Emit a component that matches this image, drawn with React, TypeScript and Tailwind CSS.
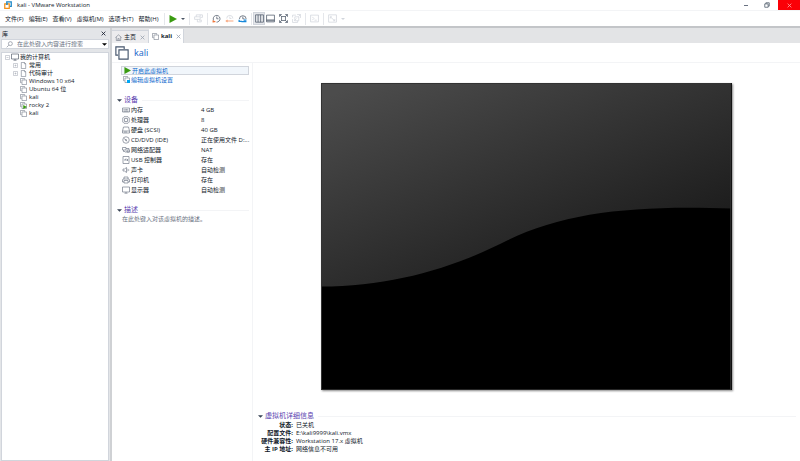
import { useState, type ReactNode } from "react";

type IconName =
  | "send"
  | "snapshot"
  | "revert"
  | "manager"
  | "library"
  | "thumbnails"
  | "fullscreen"
  | "unity"
  | "console"
  | "stretch"
  | "memory"
  | "cpu"
  | "disk"
  | "disc"
  | "network"
  | "usb"
  | "sound"
  | "printer"
  | "display"
  | "vm"
  | "folder"
  | "home"
  | "search";

const SHAPES: Record<IconName, ReactNode> = {
  send: <path d="M4 5V1.500h11V6h-3M1 5h10v4.500H1zM6 9.500V14h7v-3M9 11h4.500M11 1.500v3" />,
  snapshot: (
    <>
      <path d="M3 11.500A6 6 0 1 1 8 14.500" />
      <path d="M8.500 4.500v4h3" />
      <path d="M1 13.500h5M2 11v4" stroke="#f0763a" strokeWidth="2" />
    </>
  ),
  revert: (
    <>
      <path d="M3 8a5.500 5.500 0 0 1 11 0M8.500 4.500v3.500h3" />
      <path d="M2 12.500h13M4.500 10.500L2 12.500l2.500 2" stroke="#f8a880" strokeWidth="1.800" />
    </>
  ),
  manager: (
    <>
      <path d="M2.500 9a6 6 0 1 1 12 0M8.500 4.500v4h3" />
      <path d="M2 10v3h5M6 13.500h9M10 11h5" stroke="#1687d9" strokeWidth="2.200" />
    </>
  ),
  library: <path d="M1 1.500h14v13H1zM5.500 1.500v13M10 1.500v13" />,
  thumbnails: <path d="M1 2h14v12H1zM1 10.500h14M1 12h14" />,
  fullscreen: (
    <path d="M1 5V1h4M11 1h4v4M15 11v4h-4M5 15H1v-4M1 1l4 4M15 1l-4 4M15 15l-4-4M1 15l4-4M4.500 4.500h7v7h-7z" />
  ),
  unity: <path d="M1 6V2h6M9 1h6v6M1 9v6h9v-3M5 5h7v7H5zM12 4l3-3M4 12l4-4" />,
  console: <path d="M1 2h14v12H1zM4 5l3 3-3 3M8 11h4" />,
  stretch: <path d="M1 1.500h14v13H1zM4 5l8 7M4 8V5h3M12 9v3H9" />,
  memory: <path d="M1 4h14v8H1zM4 6v3M6.500 6v3M9 6v3M11.500 6v3M3 10.500h10" />,
  cpu: <path d="M4 1.500h8L14.500 4v8L12 14.500H4L1.500 12V4zM5 5h6v6H5z" />,
  disk: <path d="M3 2h10l2 8v4H1v-4zM1 10h14M4 12h6" />,
  disc: (
    <>
      <circle cx="8" cy="8" r="6.500" />
      <path d="M4 5l4 3 2 3" />
      <circle cx="8" cy="8" r="1" />
    </>
  ),
  network: <path d="M1 3h7v5H1zM3 8v3M8 5h6v3M6 12h9M10 8h5v4h-5zM3 11h3" />,
  usb: <path d="M2 1h12v14H2zM4 8h8M10 6l2 2-2 2M6 8l2-3" />,
  sound: <path d="M2 6h3l4-3v10l-4-3H2zM11.500 5.500q2 2.500 0 5M13.500 8h1" />,
  printer: <path d="M4 6V2h8v4M2 6h12l1 2v4h-3M2 6L1 8v4h3M4 9h8v5H4z" />,
  display: <path d="M1 2h14v10H1zM5 14.500h6M8 12v2" />,
  vm: (
    <>
      <path d="M3.500 10.500H1V1h9.500v2.500" />
      <path d="M4.500 4.500H15V15H4.500z" />
    </>
  ),
  folder: <path d="M3 1h7l3 3v11H3zM10 1v3h3" />,
  home: <path d="M1 8l7-6 7 6M3 7v8h10V7M6.500 15v-4.500h3V15" />,
  search: (
    <>
      <circle cx="10" cy="6" r="4.500" />
      <path d="M6.500 9.500L1.500 14.500" />
    </>
  ),
};

function Icon({ name, className = "size-2 text-gray-500" }: { name: IconName; className?: string }) {
  return (
    <svg
      viewBox="0 0 16 16"
      fill="none"
      stroke="currentColor"
      strokeWidth="1.300"
      className={`shrink-0 ${className}`}
      aria-hidden="true"
    >
      {SHAPES[name]}
    </svg>
  );
}

function Play({ className }: { className: string }) {
  return (
    <svg viewBox="0 0 8 8" fill="#3a9b11" className={`shrink-0 ${className}`} aria-hidden="true">
      <path d="M0.500 0L8 4L0.500 8z" />
    </svg>
  );
}

function Caret({ className }: { className: string }) {
  return (
    <svg viewBox="0 0 8 4" fill="currentColor" className={`shrink-0 ${className}`} aria-hidden="true">
      <path d="M0 0h8L4 4z" />
    </svg>
  );
}

function Cross({ className }: { className: string }) {
  return (
    <svg viewBox="0 0 8 8" fill="none" stroke="currentColor" className={`shrink-0 ${className}`} aria-hidden="true">
      <path d="M1 1l6 6M7 1L1 7" strokeWidth="1.300" />
    </svg>
  );
}

function Separator() {
  return <span className="h-3 w-px shrink-0 bg-gray-200" />;
}

const MENUS = ["文件(F)", "编辑(E)", "查看(V)", "虚拟机(M)", "选项卡(T)", "帮助(H)"];

const TREE = [
  { id: 1, label: "常用", folder: true, running: false },
  { id: 2, label: "代码审计", folder: true, running: false },
  { id: 3, label: "Windows 10 x64", folder: false, running: false },
  { id: 4, label: "Ubuntu 64 位", folder: false, running: false },
  { id: 5, label: "kali", folder: false, running: false },
  { id: 6, label: "rocky 2", folder: false, running: true },
  { id: 7, label: "kali", folder: false, running: false },
];

const DEVICES: { icon: IconName; label: string; value: string }[] = [
  { icon: "memory", label: "内存", value: "4 GB" },
  { icon: "cpu", label: "处理器", value: "8" },
  { icon: "disk", label: "硬盘 (SCSI)", value: "40 GB" },
  { icon: "disc", label: "CD/DVD (IDE)", value: "正在使用文件 D:..." },
  { icon: "network", label: "网络适配器", value: "NAT" },
  { icon: "usb", label: "USB 控制器", value: "存在" },
  { icon: "sound", label: "声卡", value: "自动检测" },
  { icon: "printer", label: "打印机", value: "存在" },
  { icon: "display", label: "显示器", value: "自动检测" },
];

const DETAILS = [
  { label: "状态:", value: "已关机" },
  { label: "配置文件:", value: "E:\\kali9999\\kali.vmx" },
  { label: "硬件兼容性:", value: "Workstation 17.x 虚拟机" },
  { label: "主 IP 地址:", value: "网络信息不可用" },
];

function TitleBar() {
  return (
    <header className="flex h-[11px] items-center border-b border-gray-100 pl-1">
      <svg viewBox="0 0 16 16" fill="none" strokeWidth="2.500" className="size-2 shrink-0" aria-hidden="true">
        <path d="M5.500 5V1.500h9v9H11" stroke="#1b86c6" />
        <path d="M1.500 5.500h9v9h-9z" stroke="#f39019" />
        <path d="M5.500 8V5.500H8" stroke="#1b86c6" />
      </svg>
      <h1 className="ml-[5px] flex-1 leading-2">kali - VMware Workstation</h1>
      <button aria-label="最小化" className="flex h-full w-[21px] items-center justify-center text-gray-500">
        <span className="h-px w-1 bg-current" />
      </button>
      <button aria-label="还原" className="flex h-full w-[22px] items-center justify-center text-gray-600">
        <svg viewBox="0 0 8 8" fill="none" stroke="currentColor" className="size-1.5" aria-hidden="true">
          <path d="M1 2.500h4.500V7H1zM2.500 2.500V1H7v4.500H5.500" />
        </svg>
      </button>
      <button aria-label="关闭" className="flex h-full w-[22px] items-center justify-center bg-[#fb0007] text-red-300">
        <Cross className="size-[5px]" />
      </button>
    </header>
  );
}

function ToolButton({ icon, label, className }: { icon: IconName; label: string; className?: string }) {
  return (
    <button aria-label={label} className="flex items-center">
      <Icon name={icon} className={className ?? "size-[9px] text-gray-600"} />
    </button>
  );
}

function MenuBar() {
  return (
    <div className="flex h-[17px] items-center border-b-2 border-[#c3c5c8] pl-[5px]">
      <nav className="flex shrink-0 gap-[5px]">
        {MENUS.map((menu) => (
          <button key={menu} className="whitespace-nowrap">
            {menu}
          </button>
        ))}
      </nav>
      <div className="ml-1.5 flex items-center gap-1">
        <Separator />
        <button aria-label="开启" className="flex items-center gap-1 text-gray-600">
          <Play className="size-2" />
          <Caret className="h-0.5 w-1" />
        </button>
        <Separator />
        <ToolButton icon="send" label="发送" className="size-[9px] text-gray-300" />
        <Separator />
        <ToolButton icon="snapshot" label="拍摄快照" />
        <ToolButton icon="revert" label="恢复快照" className="size-[9px] text-gray-300" />
        <ToolButton icon="manager" label="管理快照" />
        <Separator />
        <button
          aria-label="显示库"
          className="-mx-[3px] flex h-[13px] w-3 items-center justify-center border border-gray-300 bg-gray-200"
        >
          <Icon name="library" className="size-[9px] text-gray-600" />
        </button>
        <ToolButton icon="thumbnails" label="缩略图栏" />
        <ToolButton icon="fullscreen" label="全屏" />
        <ToolButton icon="unity" label="Unity" className="size-[9px] text-gray-300" />
        <Separator />
        <ToolButton icon="console" label="控制台" className="size-[9px] text-gray-300" />
        <Separator />
        <button aria-label="自由拉伸" className="flex items-center gap-1 text-gray-300">
          <Icon name="stretch" className="size-[9px]" />
          <Caret className="h-0.5 w-1" />
        </button>
      </div>
    </div>
  );
}

function Library() {
  const [query, setQuery] = useState("");

  return (
    <aside className="flex w-[110px] shrink-0 flex-col bg-[#e3e5e8]">
      <div className="flex h-[11px] items-center justify-between pl-0.5 pr-1">
        <h2>库</h2>
        <button aria-label="关闭库">
          <Cross className="size-[5px]" />
        </button>
      </div>
      <div className="mx-px flex h-2.5 items-center border border-gray-300 bg-white pl-1">
        <Icon name="search" className="size-[7px] text-gray-500" />
        <input
          aria-label="搜索"
          value={query}
          onChange={(e) => setQuery(e.target.value)}
          placeholder="在此处键入内容进行搜索"
          className="ml-1 h-2 min-w-0 flex-1 bg-transparent leading-2 outline-none placeholder:text-gray-500"
        />
        <button aria-label="搜索选项" className="px-px text-black">
          <Caret className="h-[3px] w-[5px]" />
        </button>
      </div>
      <div className="mx-px mt-[3px] flex-1 border border-gray-300 bg-white pl-[3px]">
        <button className="flex h-2 items-center">
          <svg viewBox="0 0 10 10" fill="none" stroke="#9ca3af" className="size-[5px]" aria-hidden="true">
            <path d="M1 1h8v8H1zM3 5h4" />
          </svg>
          <Icon name="display" className="ml-px size-2 text-gray-600" />
          <span className="ml-px">我的计算机</span>
        </button>
        <ul>
          {TREE.map((item) => (
            <li key={item.id}>
              <button className="flex h-2 items-center pl-2">
                <span className="flex w-[7px] shrink-0">
                  {item.folder && (
                    <svg viewBox="0 0 10 10" fill="none" stroke="#9ca3af" className="size-[5px]" aria-hidden="true">
                      <path d="M1 1h8v8H1zM3 5h4M5 3v4" />
                    </svg>
                  )}
                </span>
                <span className="relative">
                  <Icon name={item.folder ? "folder" : "vm"} className="size-[7px] text-gray-500" />
                  {item.running && <Play className="absolute bottom-0 right-0 size-1" />}
                </span>
                <span className="ml-0.5 whitespace-nowrap">{item.label}</span>
              </button>
            </li>
          ))}
        </ul>
      </div>
    </aside>
  );
}

function Tabs() {
  return (
    <div className="flex h-[15px] items-end bg-[#e3e4e6]">
      <div className="flex h-[13px] items-center border-r border-t border-gray-300 bg-[#ececee] px-[3px]">
        <button className="flex items-center gap-0.5">
          <Icon name="home" className="size-[7px] text-gray-500" />
          主页
        </button>
        <button aria-label="关闭主页" className="ml-1 text-gray-400">
          <Cross className="size-[5px]" />
        </button>
      </div>
      <div className="flex h-3.5 items-center border-r border-gray-300 bg-white pl-[3px] pr-0.5">
        <button className="flex items-center gap-0.5 font-bold">
          <Icon name="vm" className="size-[7px] text-gray-500" />
          kali
        </button>
        <button aria-label="关闭 kali" className="ml-1 text-gray-400">
          <Cross className="size-[5px]" />
        </button>
      </div>
    </div>
  );
}

function SectionTitle({ children }: { children: ReactNode }) {
  return (
    <h3 className="flex h-2.5 items-center text-[7px] text-[#5b3fb0]">
      <Caret className="mr-0.5 h-[3px] w-[5px] text-gray-700" />
      {children}
      <span className="ml-1 h-px flex-1 bg-gray-100" />
    </h3>
  );
}

function Summary() {
  return (
    <section className="w-[141px] shrink-0 border-r border-gray-100 pl-[5px] pr-[3px] pt-[3px]">
      <div className="pl-1">
        <button className="flex h-[9px] w-full items-center gap-px border border-gray-300 bg-[#f1f6fb] pl-0.5 text-[#0a66cc]">
          <Play className="size-[7px]" />
          开启此虚拟机
        </button>
        <button className="flex h-[9px] items-center gap-px pl-0.5 text-[#0a66cc]">
          <span className="relative">
            <Icon name="vm" className="size-[7px] text-gray-500" />
            <span className="absolute bottom-0 right-0 size-[3px] bg-sky-500" />
          </span>
          编辑虚拟机设置
        </button>
      </div>

      <div className="mt-[11px]">
        <SectionTitle>设备</SectionTitle>
        <table className="w-full table-fixed text-left">
          <tbody>
            {DEVICES.map((device) => (
              <tr key={device.label} className="h-2.5">
                <th scope="row" className="w-[84px] p-0 pl-[5px] font-normal">
                  <span className="flex items-center gap-px">
                    <Icon name={device.icon} />
                    {device.label}
                  </span>
                </th>
                <td className="whitespace-nowrap p-0">{device.value}</td>
              </tr>
            ))}
          </tbody>
        </table>
      </div>

      <div className="mt-2.5">
        <SectionTitle>描述</SectionTitle>
        <textarea
          aria-label="描述"
          rows={3}
          placeholder="在此处键入对该虚拟机的描述。"
          className="block w-full resize-none pl-[5px] outline-none placeholder:text-gray-500"
        />
      </div>
    </section>
  );
}

function Screen() {
  return (
    <svg
      viewBox="0 0 410 307"
      preserveAspectRatio="none"
      className="mx-auto block w-3/4 bg-black shadow-[1px_1px_2px_#888]"
      role="img"
      aria-label="kali"
    >
      <defs>
        <linearGradient id="glass" gradientUnits="userSpaceOnUse" x1="6" y1="14" x2="115" y2="271">
          <stop offset="0" stopColor="#4c4c4c" />
          <stop offset="1" stopColor="#1a1a1a" />
        </linearGradient>
      </defs>
      <path d="M0 0h410v307H0z" fill="url(#glass)" />
      <path d="M0 203.500C70 203 130 186 187 157C245 128 320 122 410 125.500V307H0z" fill="#000" />
      <path d="M0.500 0.500h409v306H0.500z" fill="none" stroke="#333" />
    </svg>
  );
}

function Preview() {
  return (
    <section className="min-w-0 flex-1 pt-5">
      <Screen />
      <div className="mt-[21px] pl-[5px] pr-1">
        <SectionTitle>虚拟机详细信息</SectionTitle>
        <dl>
          {DETAILS.map((row) => (
            <div key={row.label} className="flex h-2 items-center gap-[3px]">
              <dt className="w-[35px] shrink-0 whitespace-nowrap text-right font-bold">{row.label}</dt>
              <dd className="whitespace-nowrap">{row.value}</dd>
            </div>
          ))}
        </dl>
      </div>
    </section>
  );
}

export default function App() {
  return (
    <div
      lang="zh-CN"
      className="flex min-h-screen flex-col bg-white font-['Open_Sans','Noto_Sans_CJK_SC',sans-serif] text-[6px] leading-2 text-gray-900"
    >
      <TitleBar />
      <MenuBar />
      <div className="flex flex-1">
        <Library />
        <main className="flex min-w-0 flex-1 flex-col border-l-2 border-[#cfd1d4]">
          <Tabs />
          <div className="flex h-5 items-center gap-1 border-b border-gray-100 pl-[3px]">
            <Icon name="vm" className="size-3.5 text-slate-600" />
            <h2 className="ml-px text-[9px] text-[#1464c8]">kali</h2>
          </div>
          <div className="flex flex-1">
            <Summary />
            <Preview />
          </div>
        </main>
      </div>
    </div>
  );
}
